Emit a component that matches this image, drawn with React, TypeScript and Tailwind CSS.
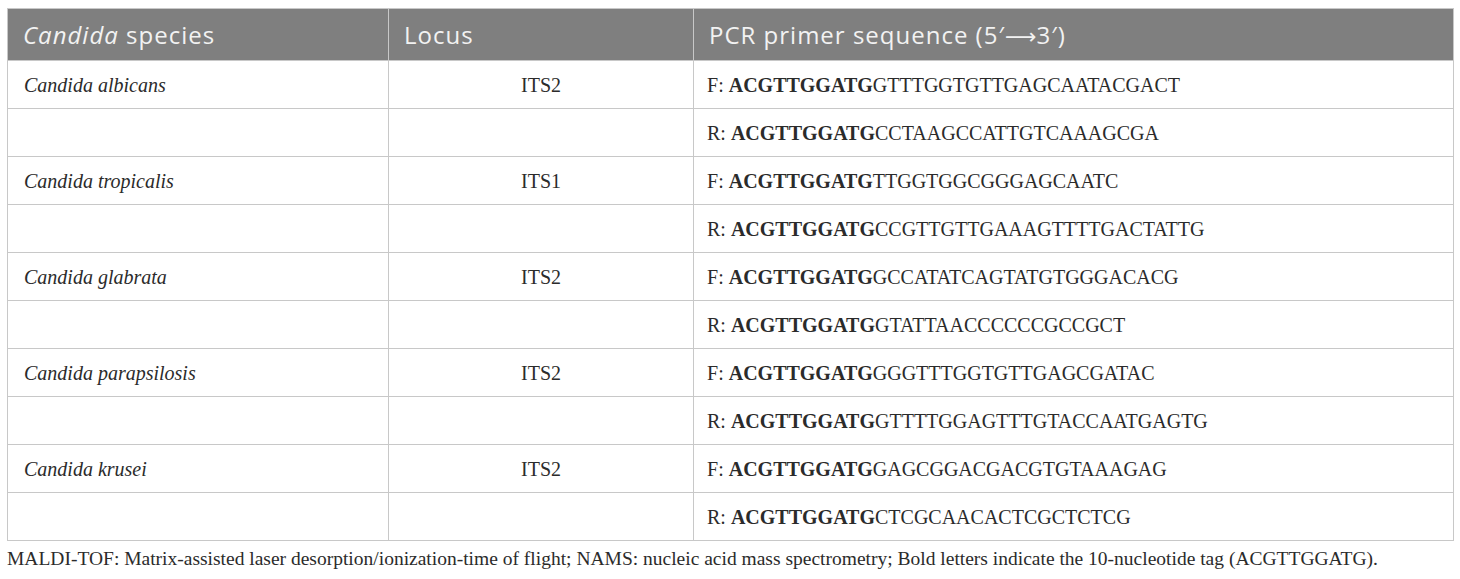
import React from "react";

const rows: { species?: string; locus?: string; dir: string; rest: string }[] = [
  { species: "Candida albicans", locus: "ITS2", dir: "F", rest: "GTTTGGTGTTGAGCAATACGACT" },
  { dir: "R", rest: "CCTAAGCCATTGTCAAAGCGA" },
  { species: "Candida tropicalis", locus: "ITS1", dir: "F", rest: "TTGGTGGCGGGAGCAATC" },
  { dir: "R", rest: "CCGTTGTTGAAAGTTTTGACTATTG" },
  { species: "Candida glabrata", locus: "ITS2", dir: "F", rest: "GCCATATCAGTATGTGGGACACG" },
  { dir: "R", rest: "GTATTAACCCCCCGCCGCT" },
  { species: "Candida parapsilosis", locus: "ITS2", dir: "F", rest: "GGGTTTGGTGTTGAGCGATAC" },
  { dir: "R", rest: "GTTTTGGAGTTTGTACCAATGAGTG" },
  { species: "Candida krusei", locus: "ITS2", dir: "F", rest: "GAGCGGACGACGTGTAAAGAG" },
  { dir: "R", rest: "CTCGCAACACTCGCTCTCG" },
];

export default function App() {
  return (
    <div className="w-[1460px] h-[579px] bg-white pt-[8px] px-[7px] overflow-hidden">
      <table className="w-[1446px] border-collapse table-fixed">
        <colgroup>
          <col className="w-[381px]" />
          <col className="w-[305px]" />
          <col className="w-[760px]" />
        </colgroup>
        <thead>
          <tr className="h-[52px] bg-[#7f7f7f] text-[#f2f2f2] text-[24px] tracking-[1px] font-['Open_Sans',sans-serif]">
            <th className="text-left font-normal pl-[15px] border border-[#c8c8c8]">
              <i>Candida</i> species
            </th>
            <th className="text-left font-normal pl-[15px] border border-[#c8c8c8]">Locus</th>
            <th className="text-left font-normal pl-[15px] border border-[#c8c8c8]">
              PCR primer sequence (5′<span className="font-['DejaVu_Sans',sans-serif] text-[22px] tracking-normal">⟶</span>3′)
            </th>
          </tr>
        </thead>
        <tbody className="font-['Liberation_Serif',serif] text-[20px] text-[#2b2b2b]">
          {rows.map((r, i) => (
            <tr key={i} className="h-[48px]">
              <td className="pl-[16px] border border-[#c8c8c8] italic">{r.species ?? ""}</td>
              <td className="text-center border border-[#c8c8c8]">{r.locus ?? ""}</td>
              <td className="pl-[13px] border border-[#c8c8c8]">
                {r.dir}: <b>ACGTTGGATG</b>
                {r.rest}
              </td>
            </tr>
          ))}
        </tbody>
      </table>
      <p className="mt-[6px] font-['Liberation_Serif',serif] text-[19.5px] text-[#2b2b2b] leading-[24px] whitespace-nowrap">
        MALDI-TOF: Matrix-assisted laser desorption/ionization-time of flight; NAMS: nucleic acid mass spectrometry; Bold letters indicate the 10-nucleotide tag (ACGTTGGATG).
      </p>
    </div>
  );
}
